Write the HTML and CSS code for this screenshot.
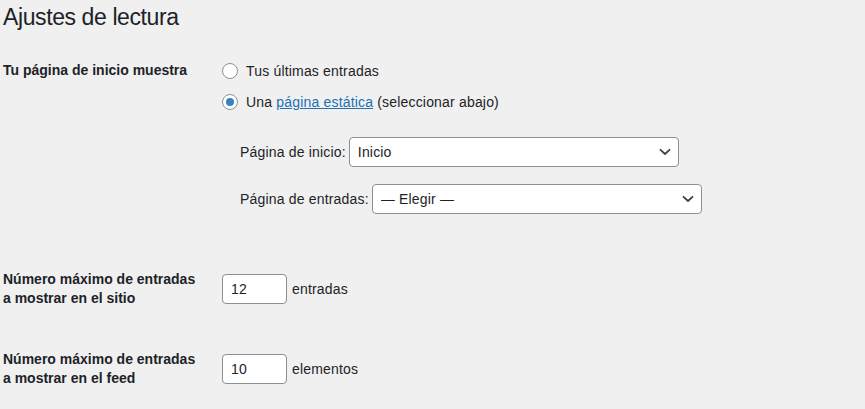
FILE: index.html
```html
<!DOCTYPE html>
<html lang="es">
<head>
<meta charset="utf-8">
<title>Ajustes de lectura</title>
<link rel="stylesheet" href="styles.css">
</head>
<body>
<div class="wrap">
  <h1 class="title">Ajustes de lectura</h1>

  <div class="form-row row-front">
    <div class="th th-single">Tu página de inicio muestra</div>
    <div class="td">
      <label class="radio-line"><span class="radio"></span>Tus últimas entradas</label>
      <label class="radio-line"><span class="radio checked"></span>Una&nbsp;<a href="#" class="link">página estática</a>&nbsp;(seleccionar abajo)</label>
      <div class="page-selects">
        <div class="sel-row">
          <span class="sel-label">Página de inicio:</span>
          <div class="select-wrap">
            <select class="select"><option>Inicio</option></select>
            <svg class="chev" width="12" height="8" viewBox="0 0 12 8"><path d="M1.5 1.8 L6 6 L10.5 1.8" fill="none" stroke="#3c434a" stroke-width="1.8" stroke-linecap="round" stroke-linejoin="round"/></svg>
          </div>
        </div>
        <div class="sel-row sel-row-2">
          <span class="sel-label">Página de entradas:</span>
          <div class="select-wrap">
            <select class="select"><option>— Elegir —</option></select>
            <svg class="chev" width="12" height="8" viewBox="0 0 12 8"><path d="M1.5 1.8 L6 6 L10.5 1.8" fill="none" stroke="#3c434a" stroke-width="1.8" stroke-linecap="round" stroke-linejoin="round"/></svg>
          </div>
        </div>
      </div>
    </div>
  </div>

  <div class="form-row row-num row-posts">
    <div class="th">Número máximo de entradas<br>a mostrar en el sitio</div>
    <div class="td td-num">
      <input class="num" type="text" value="12">
      <span class="unit">entradas</span>
    </div>
  </div>

  <div class="form-row row-num row-feed">
    <div class="th">Número máximo de entradas<br>a mostrar en el feed</div>
    <div class="td td-num">
      <input class="num" type="text" value="10">
      <span class="unit">elementos</span>
    </div>
  </div>
</div>
</body>
</html>
```

FILE: styles.css
```css
* { box-sizing: border-box; }

html, body {
  margin: 0;
  background: #f0f0f1;
}

body {
  font-family: "Liberation Sans", Arial, sans-serif;
  font-size: 14px;
  color: #1d2327;
}

.wrap {
  padding: 2px 0 0 3px;
}

.title {
  margin: 0;
  font-size: 23px;
  font-weight: 400;
  line-height: 30px;
  letter-spacing: -0.4px;
  color: #1d2327;
}

.form-row {
  display: flex;
}

.th {
  width: 219px;
  flex: none;
  font-weight: 700;
  line-height: 18.5px;
  color: #1d2327;
}

.th-single {
  line-height: 31px;
}

.td {
  letter-spacing: 0.18px;
}

.row-front {
  margin-top: 23px;
}

.radio-line {
  display: flex;
  align-items: center;
  height: 31px;
  white-space: nowrap;
}

.radio {
  width: 16px;
  height: 16px;
  border: 1px solid #8c8f94;
  border-radius: 50%;
  background: #fff;
  margin-right: 8px;
  display: flex;
  align-items: center;
  justify-content: center;
  flex: none;
}

.radio.checked::after {
  content: "";
  width: 8px;
  height: 8px;
  border-radius: 50%;
  background: #3582c4;
}

.link {
  color: #2271b1;
  text-decoration: underline;
}

.page-selects {
  margin-top: 20px;
  padding-left: 18px;
}

.sel-row {
  display: flex;
  align-items: center;
}

.sel-row-2 {
  margin-top: 17px;
}

.sel-label {
  margin-right: 3px;
  white-space: nowrap;
}

.select-wrap {
  position: relative;
  width: 330px;
  height: 30px;
}

.select {
  -webkit-appearance: none;
  appearance: none;
  width: 100%;
  height: 30px;
  border: 1px solid #8c8f94;
  border-radius: 4px;
  background: #fff;
  padding: 0 24px 0 8px;
  font-family: inherit;
  font-size: 14px;
  letter-spacing: 0.18px;
  color: #1d2327;
  margin: 0;
}

.chev {
  position: absolute;
  right: 8px;
  top: 11px;
  pointer-events: none;
}

.row-num {
  align-items: center;
}

.row-posts {
  margin-top: 56px;
}

.row-feed {
  margin-top: 43px;
}

.td-num {
  display: flex;
  align-items: center;
}

.num {
  width: 65px;
  height: 30px;
  border: 1px solid #8c8f94;
  border-radius: 4px;
  background: #fff;
  padding: 0 8px;
  font-family: inherit;
  font-size: 14px;
  letter-spacing: 0.18px;
  color: #1d2327;
  margin: 0;
}

.unit {
  margin-left: 5px;
}
```
